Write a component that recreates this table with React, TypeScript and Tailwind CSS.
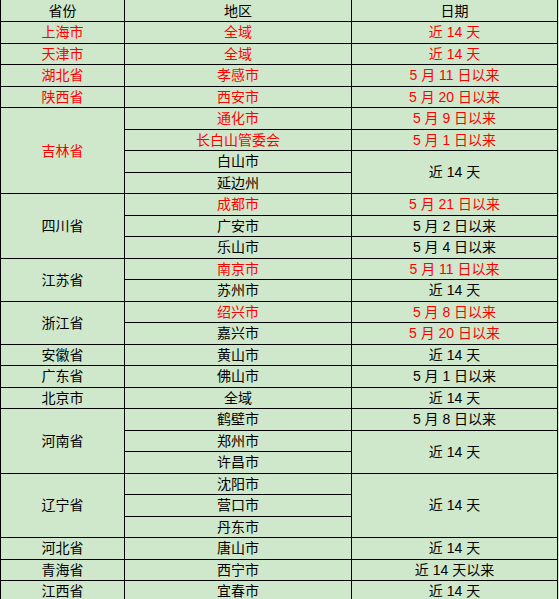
type Row = {
  province?: string;
  pSpan?: number;
  pRed?: boolean;
  region: string;
  rRed?: boolean;
  date?: string;
  dSpan?: number;
  dRed?: boolean;
};

const rows: Row[] = [
  { province: "上海市", pRed: true, region: "全域", rRed: true, date: "近 14 天", dRed: true },
  { province: "天津市", pRed: true, region: "全域", rRed: true, date: "近 14 天", dRed: true },
  { province: "湖北省", pRed: true, region: "孝感市", rRed: true, date: "5 月 11 日以来", dRed: true },
  { province: "陕西省", pRed: true, region: "西安市", rRed: true, date: "5 月 20 日以来", dRed: true },
  { province: "吉林省", pSpan: 4, pRed: true, region: "通化市", rRed: true, date: "5 月 9 日以来", dRed: true },
  { region: "长白山管委会", rRed: true, date: "5 月 1 日以来", dRed: true },
  { region: "白山市", date: "近 14 天", dSpan: 2 },
  { region: "延边州" },
  { province: "四川省", pSpan: 3, region: "成都市", rRed: true, date: "5 月 21 日以来", dRed: true },
  { region: "广安市", date: "5 月 2 日以来" },
  { region: "乐山市", date: "5 月 4 日以来" },
  { province: "江苏省", pSpan: 2, region: "南京市", rRed: true, date: "5 月 11 日以来", dRed: true },
  { region: "苏州市", date: "近 14 天" },
  { province: "浙江省", pSpan: 2, region: "绍兴市", rRed: true, date: "5 月 8 日以来", dRed: true },
  { region: "嘉兴市", date: "5 月 20 日以来", dRed: true },
  { province: "安徽省", region: "黄山市", date: "近 14 天" },
  { province: "广东省", region: "佛山市", date: "5 月 1 日以来" },
  { province: "北京市", region: "全域", date: "近 14 天" },
  { province: "河南省", pSpan: 3, region: "鹤壁市", date: "5 月 8 日以来" },
  { region: "郑州市", date: "近 14 天", dSpan: 2 },
  { region: "许昌市" },
  { province: "辽宁省", pSpan: 3, region: "沈阳市", date: "近 14 天", dSpan: 3 },
  { region: "营口市" },
  { region: "丹东市" },
  { province: "河北省", region: "唐山市", date: "近 14 天" },
  { province: "青海省", region: "西宁市", date: "近 14 天以来" },
  { province: "江西省", region: "宜春市", date: "近 14 天" },
];

const cell = "border border-black text-center align-middle p-0 leading-none";

export default function App() {
  return (
    <div className="w-[559px] h-[599px] overflow-hidden bg-[#cfe8cc] font-['Liberation_Sans','Noto_Sans_CJK_SC',sans-serif] text-[14px] text-black">
      <table className="table-fixed border-collapse w-[557px] -mt-px">
        <colgroup>
          <col className="w-[124px]" />
          <col className="w-[227px]" />
          <col className="w-[206px]" />
        </colgroup>
        <thead>
          <tr className="h-[22px]">
            <th className={`${cell} font-normal`}>省份</th>
            <th className={`${cell} font-normal`}>地区</th>
            <th className={`${cell} font-normal`}>日期</th>
          </tr>
        </thead>
        <tbody>
          {rows.map((r, i) => (
            <tr key={i} className="h-[21.5px]">
              {r.province && (
                <td rowSpan={r.pSpan ?? 1} className={`${cell} ${r.pRed ? "text-[#ff0000]" : ""}`}>
                  {r.province}
                </td>
              )}
              <td className={`${cell} ${r.rRed ? "text-[#ff0000]" : ""}`}>{r.region}</td>
              {r.date && (
                <td rowSpan={r.dSpan ?? 1} className={`${cell} ${r.dRed ? "text-[#ff0000]" : ""}`}>
                  {r.date}
                </td>
              )}
            </tr>
          ))}
        </tbody>
      </table>
    </div>
  );
}
